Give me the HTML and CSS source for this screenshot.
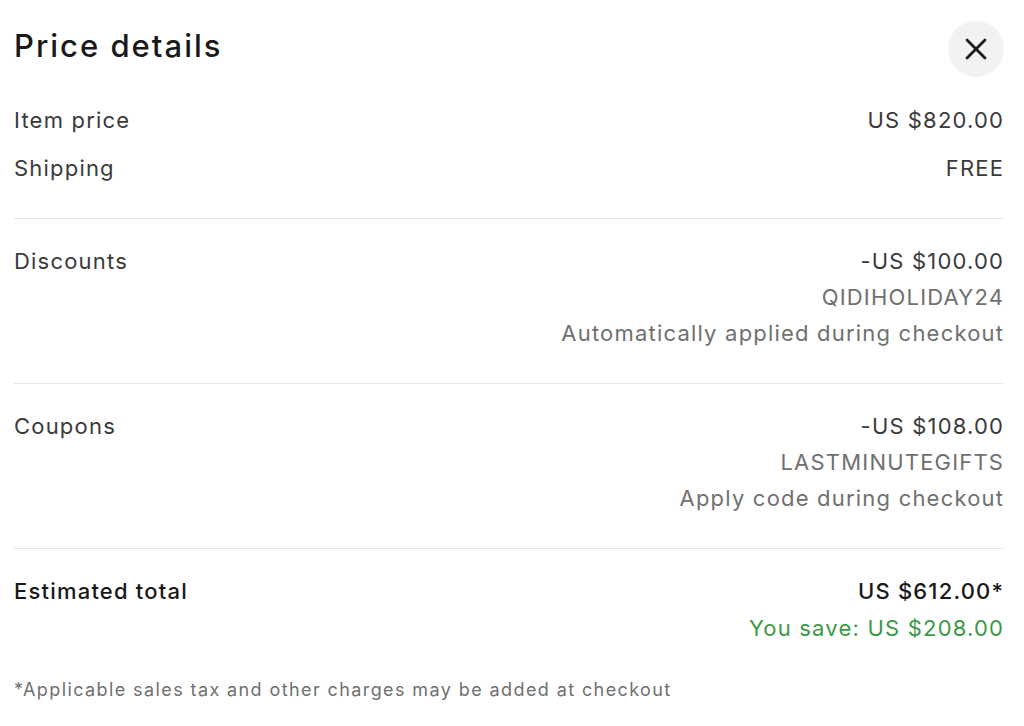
FILE: index.html
```html
<!DOCTYPE html>
<html lang="en">
<head>
<meta charset="utf-8">
<title>Price details</title>
<link rel="stylesheet" href="styles.css">
</head>
<body>
<div class="dialog">
  <header class="header">
    <h1 class="title">Price details</h1>
    <button class="close" aria-label="Close">
      <svg width="22" height="22" viewBox="0 0 22 22"><path d="M2 2L20 20M20 2L2 20" stroke="#191919" stroke-width="2.8" stroke-linecap="round"/></svg>
    </button>
  </header>

  <section class="section first">
    <div class="row"><span class="label">Item price</span><span class="value">US $820.00</span></div>
    <div class="row gap"><span class="label">Shipping</span><span class="value">FREE</span></div>
  </section>

  <section class="section">
    <div class="row">
      <span class="label">Discounts</span>
      <div class="values">
        <span class="value">-US $100.00</span>
        <span class="sub">QIDIHOLIDAY24</span>
        <span class="sub">Automatically applied during checkout</span>
      </div>
    </div>
  </section>

  <section class="section">
    <div class="row">
      <span class="label">Coupons</span>
      <div class="values">
        <span class="value">-US $108.00</span>
        <span class="sub">LASTMINUTEGIFTS</span>
        <span class="sub">Apply code during checkout</span>
      </div>
    </div>
  </section>

  <section class="section last">
    <div class="row">
      <span class="label strong">Estimated total</span>
      <div class="values">
        <span class="value strong">US $612.00*</span>
        <span class="save">You save: US $208.00</span>
      </div>
    </div>
  </section>

  <p class="note">*Applicable sales tax and other charges may be added at checkout</p>
</div>
</body>
</html>
```
FILE: styles.css
```css
* { box-sizing: border-box; }
html, body { margin: 0; padding: 0; background: #fff; }
body {
  font-family: Inter, "Open Sans", "Liberation Sans", sans-serif;
  color: #333;
}
.dialog {
  padding: 0 21px 0 14px;
}
.header {
  display: flex;
  justify-content: space-between;
  align-items: center;
  padding-top: 21px;
}
.title {
  margin: 0 0 6px 0;
  font-size: 31px;
  font-weight: 500;
  letter-spacing: 2px;
  color: #191919;
  line-height: 36px;
}
.close {
  width: 56px;
  height: 56px;
  margin-right: -1px;
  border: none;
  border-radius: 50%;
  background: #f2f2f2;
  display: flex;
  align-items: center;
  justify-content: center;
  padding: 0;
}
.section {
  padding: 24px 0 32px;
  border-bottom: 1px solid #e5e5e5;
}
.section.first { padding-top: 25px; }
.section.last { border-bottom: none; padding-bottom: 31px; }
.row {
  display: flex;
  justify-content: space-between;
  font-size: 22px;
  letter-spacing: 1.2px;
  line-height: 36px;
}
.row.gap { margin-top: 12px; }
.values {
  display: flex;
  flex-direction: column;
  align-items: flex-end;
}
.values > span, .row > span.value { margin-right: -1.2px; }
.value { color: #3a3a3a; }
.label { color: #3a3a3a; }
.sub { color: #707070; }
.strong { font-weight: 500; color: #191919; }
.save { color: #3a9a46; line-height: 38px; }
.note {
  margin: 0;
  font-size: 18px;
  letter-spacing: 1.4px;
  line-height: 24px;
  color: #707070;
}
```
